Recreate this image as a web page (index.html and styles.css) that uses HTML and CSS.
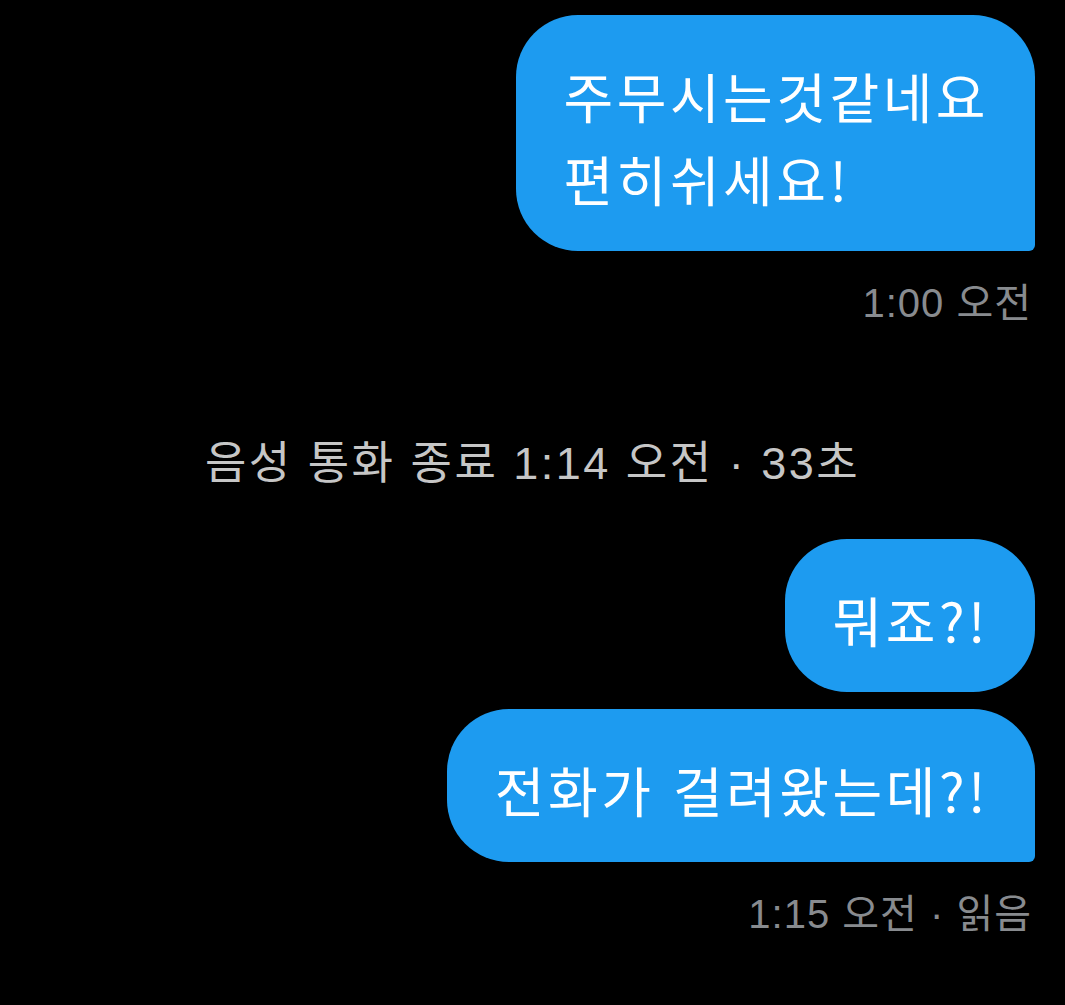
FILE: index.html
```html
<!DOCTYPE html>
<html lang="ko">
<head>
    <meta charset="UTF-8">
    <meta name="viewport" content="width=device-width, initial-scale=1.0">
    <title>메시지</title>
    <link rel="stylesheet" href="styles.css">
</head>
<body>
    <div class="chat">
        <div class="bubble last">주무시는것같네요<br>편히쉬세요!</div>
        <div class="time">1:00 오전</div>

        <div class="system">음성 통화 종료 1:14 오전 · 33초</div>

        <div class="bubble">뭐죠?!</div>
        <div class="bubble last">전화가 걸려왔는데?!</div>
        <div class="time">1:15 오전 · 읽음</div>
    </div>
</body>
</html>
```

FILE: styles.css
```css
body {
    margin: 0;
    background-color: #000;
    font-family: "Liberation Sans", "Noto Sans CJK KR", sans-serif;
    min-height: 100vh;
}
.chat {
    display: flex;
    flex-direction: column;
    align-items: flex-end;
    padding: 15px 30px 0 30px;
}
.bubble {
    background-color: #1d9bf0;
    color: #fff;
    font-family: "Noto Sans CJK KR", sans-serif;
    font-size: 54px;
    line-height: 83px;
    letter-spacing: 3.5px;
    padding: 39px 46px 31px 48px;
    border-radius: 62px;
}
.bubble + .bubble {
    margin-top: 17px;
}
.bubble.last {
    border-bottom-right-radius: 6px;
}
.time {
    color: #888b8f;
    font-size: 40px;
    line-height: 50px;
    letter-spacing: 1px;
    margin-top: 27px;
    margin-right: 3px;
}
.system {
    align-self: center;
    color: #c6c6c6;
    font-size: 45px;
    line-height: 56px;
    letter-spacing: 2.5px;
    margin: 108px 0 47px;
}
```
